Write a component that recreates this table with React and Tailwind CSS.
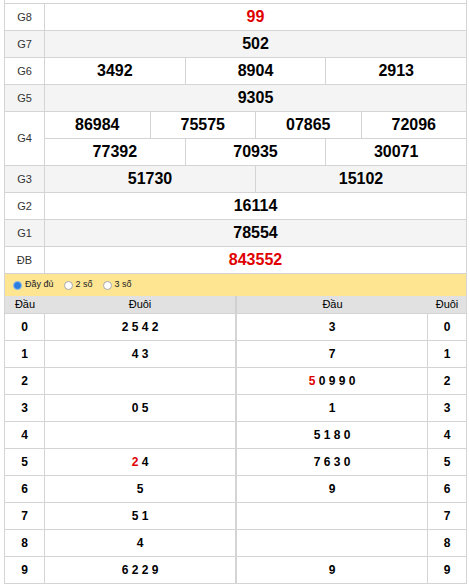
import React from 'react';

const prizes = [
  { label: 'G8', rows: [['99']], red: true },
  { label: 'G7', rows: [['502']] },
  { label: 'G6', rows: [['3492', '8904', '2913']] },
  { label: 'G5', rows: [['9305']] },
  { label: 'G4', rows: [['86984', '75575', '07865', '72096'], ['77392', '70935', '30071']] },
  { label: 'G3', rows: [['51730', '15102']] },
  { label: 'G2', rows: [['16114']] },
  { label: 'G1', rows: [['78554']] },
  { label: 'ĐB', rows: [['843552']], red: true },
];

// [head tails, tail heads] ; first digit red where marked
const loto = [
  ['2 5 4 2', '3'],
  ['4 3', '7'],
  ['', '5 0 9 9 0', false, true],
  ['0 5', '1'],
  ['', '5 1 8 0'],
  ['2 4', '7 6 3 0', true],
  ['5', '9'],
  ['5 1', ''],
  ['4', ''],
  ['6 2 2 9', '9'],
];

function Digits({ text, redFirst }) {
  if (!redFirst || !text) return <span>{text}</span>;
  return (
    <span>
      <span className="text-[#e00000]">{text[0]}</span>
      {text.slice(1)}
    </span>
  );
}

function Radio({ checked, label }) {
  return (
    <label className="flex items-center gap-[3px]">
      {checked ? (
        <span className="w-[9px] h-[9px] rounded-full bg-[#2b7de0] border border-[#8fbcec]" />
      ) : (
        <span className="w-[9px] h-[9px] rounded-full bg-white border border-[#a8a8a8]" />
      )}
      <span>{label}</span>
    </label>
  );
}

export default function App() {
  return (
    <div className="w-[470px] h-[587px] bg-white font-['Liberation_Sans',Arial,sans-serif] text-black">
      <div className="ml-[4px] w-[463px] border-x border-[#d4d4d4]">
        <div className="h-[4px] border-b border-[#d4d4d4]" />

        {prizes.map((p, i) => (
          <div key={p.label} className={`flex border-b border-[#d4d4d4] ${i % 2 ? 'bg-[#f4f4f4]' : 'bg-white'}`}>
            <div className="w-[40px] shrink-0 border-r border-[#d4d4d4] flex items-center justify-center text-[11px] text-[#333]">
              {p.label}
            </div>
            <div className="flex-1 flex flex-col">
              {p.rows.map((cells, r) => (
                <div key={r} className={`flex h-[26px] ${r < p.rows.length - 1 ? 'h-[27px] border-b border-[#d4d4d4]' : ''}`}>
                  {cells.map((c, k) => (
                    <div
                      key={k}
                      className={`flex-1 basis-0 flex items-center justify-center text-[16px] font-bold ${k < cells.length - 1 ? 'border-r border-[#d4d4d4]' : ''} ${p.red ? 'text-[#e00000]' : ''}`}
                    >
                      {c}
                    </div>
                  ))}
                </div>
              ))}
            </div>
          </div>
        ))}

        <div className="h-[22px] bg-[#fde592] flex items-center gap-[10px] pl-[8px] text-[9px] text-[#222]">
          <Radio checked label="Đầy đủ" />
          <Radio label="2 số" />
          <Radio label="3 số" />
        </div>

        <div className="flex h-[18px] bg-[#e1e1e1] border-b border-[#d4d4d4] text-[11px]">
          <div className="w-[40px] flex items-center justify-center">Đầu</div>
          <div className="w-[191px] flex items-center justify-center border-r border-[#d0d0d0]">Đuôi</div>
          <div className="w-[192px] flex items-center justify-center border-l border-[#d0d0d0]">Đầu</div>
          <div className="flex-1 flex items-center justify-center">Đuôi</div>
        </div>

        {loto.map((row, i) => (
          <div key={i} className="flex h-[27px] border-b border-[#d4d4d4] text-[12px] font-bold">
            <div className="w-[40px] border-r border-[#d4d4d4] flex items-center justify-center">{i}</div>
            <div className="w-[191px] border-r border-[#d4d4d4] flex items-center justify-center whitespace-pre">
              <Digits text={row[0]} redFirst={row[2]} />
            </div>
            <div className="w-[192px] border-l border-r border-[#d4d4d4] flex items-center justify-center whitespace-pre">
              <Digits text={row[1]} redFirst={row[3]} />
            </div>
            <div className="flex-1 flex items-center justify-center">{i}</div>
          </div>
        ))}
      </div>
    </div>
  );
}
